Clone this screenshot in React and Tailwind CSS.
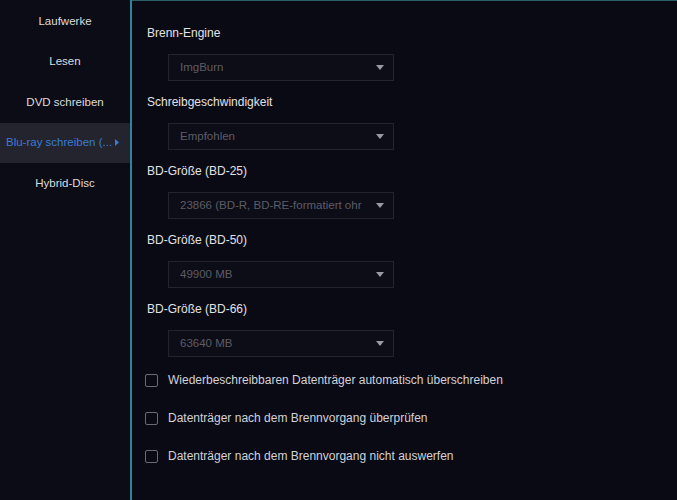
import React from 'react'

const navItems = ['Laufwerke', 'Lesen', 'DVD schreiben', 'Blu-ray schreiben (...', 'Hybrid-Disc']

const fields = [
  { label: 'Brenn-Engine', value: 'ImgBurn' },
  { label: 'Schreibgeschwindigkeit', value: 'Empfohlen' },
  { label: 'BD-Größe (BD-25)', value: '23866 (BD-R, BD-RE-formatiert ohr' },
  { label: 'BD-Größe (BD-50)', value: '49900 MB' },
  { label: 'BD-Größe (BD-66)', value: '63640 MB' },
]

const options = [
  'Wiederbeschreibbaren Datenträger automatisch überschreiben',
  'Datenträger nach dem Brennvorgang überprüfen',
  'Datenträger nach dem Brennvorgang nicht auswerfen',
]

function Select({ value }) {
  return (
    <div className="ml-[21px] w-[226px] h-[27px] flex items-center pl-[11px] pr-[9px] bg-[#0d0d17] border border-[#24242f]">
      <span className="flex-1 text-[#5c5c66] text-[11.5px] whitespace-nowrap">{value}</span>
      <svg width="8" height="5" viewBox="0 0 8 5" className="shrink-0 ml-[4px]">
        <path d="M0 0h8L4 5z" fill="#9a9aa2" />
      </svg>
    </div>
  )
}

export default function App() {
  return (
    <div
      className="w-[677px] h-[500px] flex bg-[#0a0a14] text-[12px] overflow-hidden"
      style={{ fontFamily: '"Liberation Sans", Arial, sans-serif' }}
    >
      {/* Sidebar */}
      <aside className="w-[132px] shrink-0 bg-[#0c0c16] border-r-2 border-[#2f8597] pt-px text-[11.5px]">
        {navItems.map((item, i) => (
          <div
            key={item}
            className={
              i === 3
                ? 'h-[40.5px] flex items-center pl-[6px] bg-[#24242e] text-[#3b7bd4]'
                : 'h-[40.5px] flex items-center justify-center text-[#dcdcdc]'
            }
          >
            <span className="whitespace-nowrap">{item}</span>
            {i === 3 && (
              <svg width="4" height="7" viewBox="0 0 4 7" className="ml-[3px]">
                <path d="M0 0l4 3.5L0 7z" fill="#3b7bd4" />
              </svg>
            )}
          </div>
        ))}
      </aside>

      {/* Settings */}
      <main className="flex-1 border-t border-[#2d5f69] pl-[15px] pt-[23px]">
        <div className="flex flex-col gap-[12px]">
          {fields.map((f) => (
            <div key={f.label} className="flex flex-col gap-[12px]">
              <div className="h-[18px] leading-[18px] text-[#e2e2e6]">{f.label}</div>
              <Select value={f.value} />
            </div>
          ))}
        </div>

        <div className="mt-[4px] flex flex-col">
          {options.map((o) => (
            <label key={o} className="h-[38px] flex items-center text-[#d2d2d8]">
              <span className="w-[13px] h-[13px] border border-[#6a6a74] rounded-[2px] -ml-[2px]" />
              <span className="ml-[10px]">{o}</span>
            </label>
          ))}
        </div>
      </main>
    </div>
  )
}
